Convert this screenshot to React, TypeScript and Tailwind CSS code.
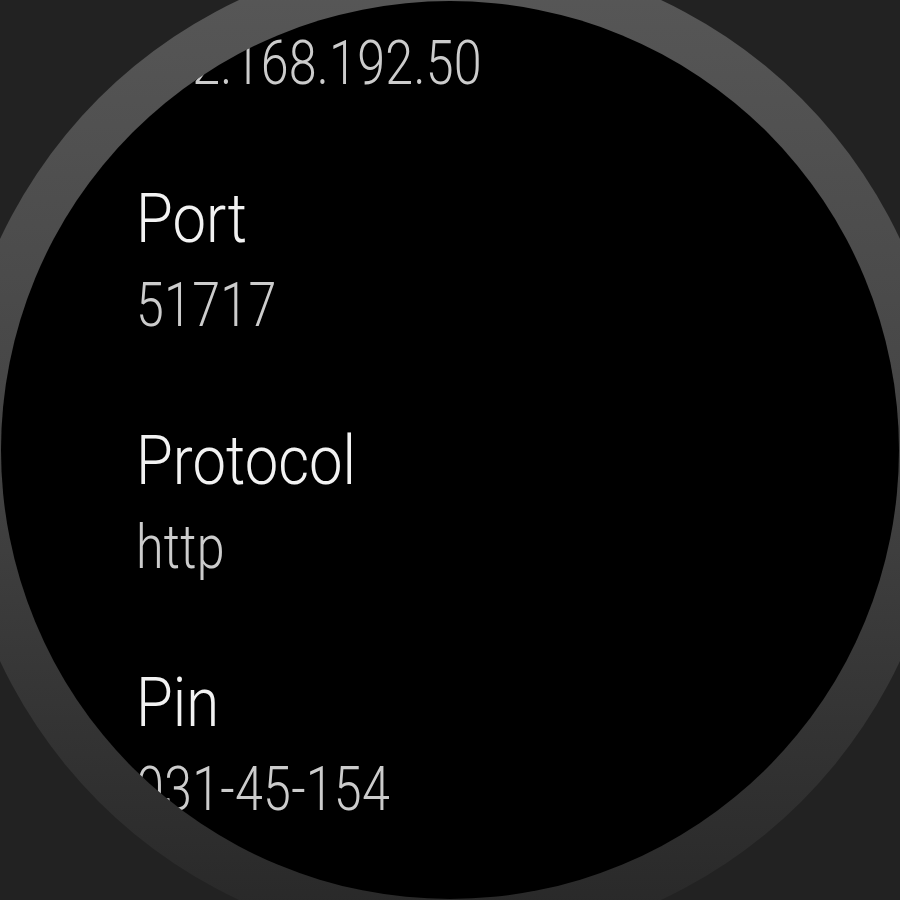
const rows = [
  { label: 'IP Address', value: '192.168.192.50' },
  { label: 'Port', value: '51717' },
  { label: 'Protocol', value: 'http' },
  { label: 'Pin', value: '031-45-154' },
];

export default function App() {
  return (
    <div className="w-[900px] h-[900px] bg-[#222222] overflow-hidden flex items-center justify-center font-['Roboto',sans-serif]">
      {/* watch bezel */}
      <div className="shrink-0 w-[994px] h-[994px] rounded-full p-[48px] bg-gradient-to-b from-[#585858] via-[#444444] to-[#272727]">
        {/* screen */}
        <div className="w-[898px] h-[898px] rounded-full bg-black overflow-hidden">
          <div className="flex flex-col gap-[72px] pl-[135px] mt-[-66px]">
            {rows.map((row) => (
              <div key={row.label} className="flex flex-col">
                <div className="h-[85px] leading-[85px] text-[68px] font-light text-[#f2f2f2] whitespace-nowrap origin-left scale-x-[0.88]">
                  {row.label}
                </div>
                <div className="h-[85px] leading-[85px] text-[62px] font-light text-[#cccccc] whitespace-nowrap origin-left scale-x-[0.81] tracking-[0.3px]">
                  {row.value}
                </div>
              </div>
            ))}
          </div>
        </div>
      </div>
    </div>
  );
}
